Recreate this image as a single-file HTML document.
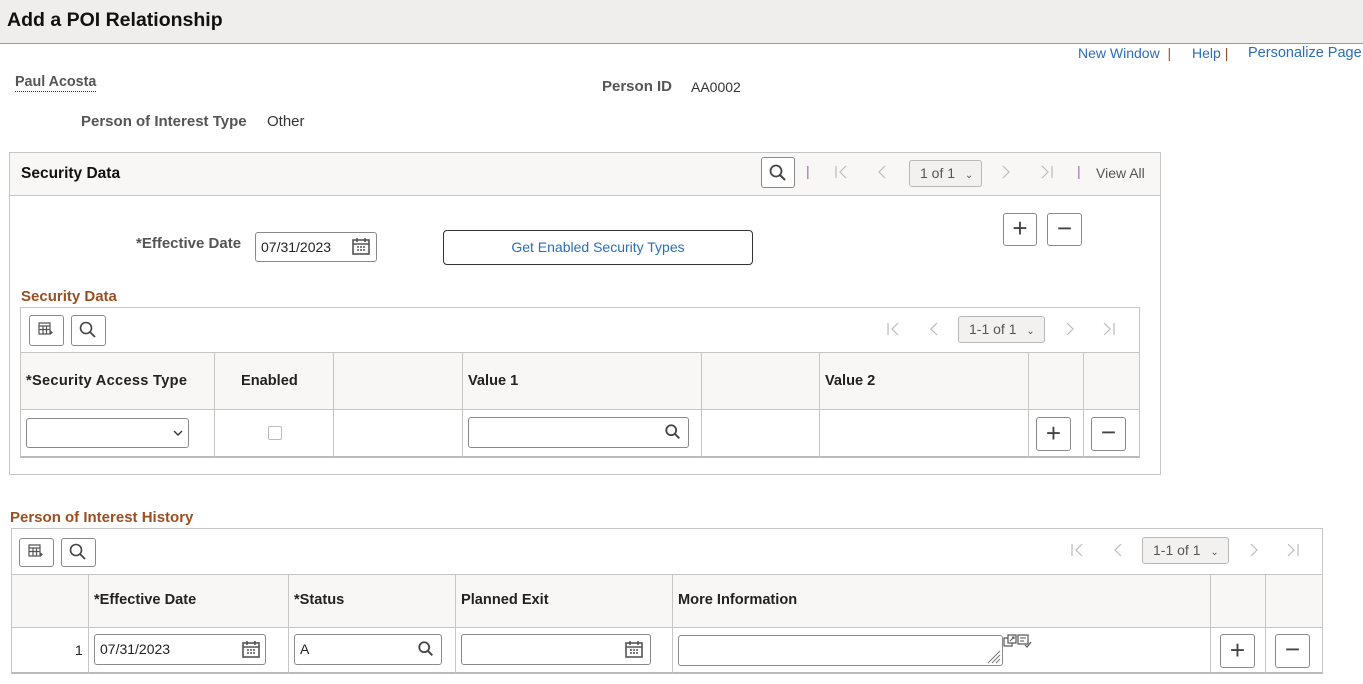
<!DOCTYPE html>
<html><head><meta charset="utf-8"><style>
*{box-sizing:border-box;margin:0;padding:0}
body{width:1363px;height:684px;position:relative;background:#fff;font-family:"Liberation Sans",Arial,sans-serif;font-size:14px;color:#333;overflow:hidden}
.a{position:absolute;white-space:nowrap}
.b{font-weight:bold}
.lbl{font-weight:bold;color:#555;font-size:15px}
.box{position:absolute;border:1px solid #c6c6c6}
.btn{position:absolute;border:1px solid #8a8a8a;border-radius:3px;background:#fff}
.inp{position:absolute;border:1px solid #8a8a8a;border-radius:3px;background:#fff;padding-left:5px;line-height:28px;color:#222}
.ln{position:absolute;background:#c6c6c6}
.hdr{position:absolute;background:#f8f7f6}
.t{color:#222;font-weight:bold;font-size:14.6px}
.grey{color:#bbb;font-size:16px;font-weight:300}
.sel{position:absolute;border:1px solid #b8b8b8;border-radius:3px;background:#f2f1f0;color:#555;padding-left:10px;line-height:24px}
.brown{color:#9b4f22;font-weight:bold;font-size:15px}
svg{position:absolute}
</style></head><body>
<div class="a" style="left:0;top:0;width:1363px;height:44px;background:#efeeed;border-bottom:1px solid #999"></div>
<div class="a b" style="left:7px;top:9px;font-size:19.5px;color:#111">Add a POI Relationship</div>
<div class="a" style="left:1078px;top:45px;color:#2a6ebb">New Window <span style="color:#9b4f22">&nbsp;|</span></div>
<div class="a" style="left:1192px;top:45px;color:#2a6ebb">Help <span style="color:#9b4f22">|</span></div>
<div class="a" style="left:1248px;top:45px;color:#2a6ebb;font-size:14.5px">Personalize Page</div>
<div class="a lbl" style="left:15px;top:74px;border-bottom:1px dotted #333;padding-bottom:1px;font-size:14.3px">Paul Acosta</div>
<div class="a lbl" style="left:602px;top:78px">Person ID</div>
<div class="a" style="left:691px;top:79px">AA0002</div>
<div class="a lbl" style="left:81px;top:113px">Person of Interest Type</div>
<div class="a" style="left:267px;top:113px;font-size:15px">Other</div>

<div class="box" style="left:9px;top:152px;width:1152px;height:323px"></div>
<div class="hdr" style="left:10px;top:153px;width:1150px;height:43px;border-bottom:1px solid #c6c6c6"></div>
<div class="a b" style="left:21px;top:165px;font-size:15.5px;color:#111">Security Data</div>
<div class="btn" style="left:761px;top:157px;width:34px;height:31px"></div>
<svg style="left:768px;top:163px" width="20" height="20" viewBox="0 0 20 20"><circle cx="8" cy="8" r="5.5" fill="none" stroke="#444" stroke-width="1.8"/><path d="M12 12l5 5" stroke="#444" stroke-width="2"/></svg>
<div class="a" style="left:806px;top:163px;color:#9b6fa0">|</div>
<svg style="left:834px;top:164px" width="14" height="16" viewBox="0 0 14 16"><path d="M2 2v12M12 2L6 8l6 6" fill="none" stroke="#bbb" stroke-width="1.2"/></svg>
<svg style="left:876px;top:164px" width="12" height="16" viewBox="0 0 12 16"><path d="M9 2L3 8l6 6" fill="none" stroke="#bbb" stroke-width="1.2"/></svg>
<div class="sel" style="left:909px;top:160px;width:73px;height:27px">1 of 1 <span style="font-size:10px;margin-left:6px">&#8964;</span></div>
<svg style="left:1000px;top:164px" width="12" height="16" viewBox="0 0 12 16"><path d="M3 2l6 6-6 6" fill="none" stroke="#bbb" stroke-width="1.2"/></svg>
<svg style="left:1040px;top:164px" width="14" height="16" viewBox="0 0 14 16"><path d="M2 2l6 6-6 6M12 2v12" fill="none" stroke="#bbb" stroke-width="1.2"/></svg>
<div class="a" style="left:1077px;top:163px;color:#9b6fa0">|</div>
<div class="a" style="left:1096px;top:165px;color:#555">View All</div>

<div class="btn" style="left:1003px;top:213px;width:34px;height:33px;font-size:26px;line-height:29px;text-align:center;color:#444">+</div>
<div class="btn" style="left:1047px;top:213px;width:35px;height:33px;font-size:26px;line-height:28px;text-align:center;color:#444">&minus;</div>

<div class="a lbl" style="left:136px;top:235px">*Effective Date</div>
<div class="inp" style="left:255px;top:232px;width:122px;height:30px">07/31/2023</div>
<svg style="left:351px;top:236px" width="20" height="20" viewBox="0 0 20 20"><rect x="2" y="4" width="16" height="14" fill="none" stroke="#555" stroke-width="1.6"/><path d="M2 8h16M6 2v4M14 2v4" stroke="#555" stroke-width="1.6"/><path d="M6 11h2M9 11h2M12 11h2M6 14h2M9 14h2M12 14h2" stroke="#555" stroke-width="1.4"/></svg>
<div class="a" style="left:443px;top:230px;width:310px;height:35px;border:1px solid #333;border-radius:4px;text-align:center;line-height:33px;color:#2a6ebb">Get Enabled Security Types</div>

<div class="a brown" style="left:21px;top:288px">Security Data</div>
<div class="box" style="left:20px;top:307px;width:1120px;height:151px;border-bottom:2px solid #bbb"></div>
<div class="btn" style="left:29px;top:315px;width:35px;height:31px"></div>
<svg style="left:37px;top:321px" width="18" height="18" viewBox="0 0 18 18"><path d="M2 2h11v11H2zM2 5h11M2 8.5h11M6 5v8M9.5 5v8" fill="none" stroke="#555" stroke-width="1.2"/><path d="M13 9l3 2.5-3 2.5z" fill="#555"/></svg>
<div class="btn" style="left:71px;top:315px;width:35px;height:31px"></div>
<svg style="left:78px;top:320px" width="20" height="20" viewBox="0 0 20 20"><circle cx="8" cy="8" r="5.5" fill="none" stroke="#444" stroke-width="1.6"/><path d="M12 12l5 5" stroke="#444" stroke-width="1.8"/></svg>
<svg style="left:886px;top:321px" width="14" height="16" viewBox="0 0 14 16"><path d="M2 2v12M12 2L6 8l6 6" fill="none" stroke="#bbb" stroke-width="1.2"/></svg>
<svg style="left:928px;top:321px" width="12" height="16" viewBox="0 0 12 16"><path d="M9 2L3 8l6 6" fill="none" stroke="#bbb" stroke-width="1.2"/></svg>
<div class="sel" style="left:958px;top:316px;width:87px;height:27px">1-1 of 1 <span style="font-size:10px;margin-left:6px">&#8964;</span></div>
<svg style="left:1064px;top:321px" width="12" height="16" viewBox="0 0 12 16"><path d="M3 2l6 6-6 6" fill="none" stroke="#bbb" stroke-width="1.2"/></svg>
<svg style="left:1102px;top:321px" width="14" height="16" viewBox="0 0 14 16"><path d="M2 2l6 6-6 6M12 2v12" fill="none" stroke="#bbb" stroke-width="1.2"/></svg>
<div class="hdr" style="left:21px;top:352px;width:1118px;height:58px;border-top:1px solid #c6c6c6;border-bottom:1px solid #c6c6c6"></div>
<div class="ln" style="left:214px;top:352px;width:1px;height:105px"></div>
<div class="ln" style="left:333px;top:352px;width:1px;height:105px"></div>
<div class="ln" style="left:462px;top:352px;width:1px;height:105px"></div>
<div class="ln" style="left:701px;top:352px;width:1px;height:105px"></div>
<div class="ln" style="left:819px;top:352px;width:1px;height:105px"></div>
<div class="ln" style="left:1028px;top:352px;width:1px;height:105px"></div>
<div class="ln" style="left:1083px;top:352px;width:1px;height:105px"></div>
<div class="a t" style="left:26px;top:373px;letter-spacing:0.3px">*Security Access Type</div>
<div class="a t" style="left:241px;top:373px">Enabled</div>
<div class="a t" style="left:468px;top:373px">Value 1</div>
<div class="a t" style="left:825px;top:373px">Value 2</div>
<div class="inp" style="left:26px;top:418px;width:163px;height:30px"></div>
<svg style="left:173px;top:429px" width="10" height="8" viewBox="0 0 10 8"><path d="M1 2l4 4 4-4" fill="none" stroke="#333" stroke-width="1.4"/></svg>
<div class="a" style="left:268px;top:426px;width:14px;height:14px;border:1px solid #bbb;border-radius:2px"></div>
<div class="inp" style="left:468px;top:417px;width:221px;height:31px"></div>
<svg style="left:664px;top:423px" width="18" height="18" viewBox="0 0 20 20"><circle cx="8" cy="8" r="5.5" fill="none" stroke="#444" stroke-width="2"/><path d="M12 12l5 5" stroke="#444" stroke-width="2.2"/></svg>
<div class="btn" style="left:1036px;top:417px;width:35px;height:34px;font-size:26px;line-height:30px;text-align:center;color:#444">+</div>
<div class="btn" style="left:1091px;top:417px;width:35px;height:34px;font-size:26px;line-height:29px;text-align:center;color:#444">&minus;</div>

<div class="a brown" style="left:10px;top:509px">Person of Interest History</div>
<div class="box" style="left:11px;top:528px;width:1312px;height:146px;border-bottom:2px solid #bbb"></div>
<div class="btn" style="left:19px;top:538px;width:35px;height:29px"></div>
<svg style="left:27px;top:543px" width="18" height="18" viewBox="0 0 18 18"><path d="M2 2h11v11H2zM2 5h11M2 8.5h11M6 5v8M9.5 5v8" fill="none" stroke="#555" stroke-width="1.2"/><path d="M13 9l3 2.5-3 2.5z" fill="#555"/></svg>
<div class="btn" style="left:61px;top:538px;width:35px;height:29px"></div>
<svg style="left:68px;top:542px" width="20" height="20" viewBox="0 0 20 20"><circle cx="8" cy="8" r="5.5" fill="none" stroke="#444" stroke-width="1.6"/><path d="M12 12l5 5" stroke="#444" stroke-width="1.8"/></svg>
<svg style="left:1070px;top:542px" width="14" height="16" viewBox="0 0 14 16"><path d="M2 2v12M12 2L6 8l6 6" fill="none" stroke="#bbb" stroke-width="1.2"/></svg>
<svg style="left:1112px;top:542px" width="12" height="16" viewBox="0 0 12 16"><path d="M9 2L3 8l6 6" fill="none" stroke="#bbb" stroke-width="1.2"/></svg>
<div class="sel" style="left:1142px;top:537px;width:87px;height:27px">1-1 of 1 <span style="font-size:10px;margin-left:6px">&#8964;</span></div>
<svg style="left:1248px;top:542px" width="12" height="16" viewBox="0 0 12 16"><path d="M3 2l6 6-6 6" fill="none" stroke="#bbb" stroke-width="1.2"/></svg>
<svg style="left:1286px;top:542px" width="14" height="16" viewBox="0 0 14 16"><path d="M2 2l6 6-6 6M12 2v12" fill="none" stroke="#bbb" stroke-width="1.2"/></svg>
<div class="hdr" style="left:12px;top:574px;width:1310px;height:54px;border-top:1px solid #c6c6c6;border-bottom:1px solid #c6c6c6"></div>
<div class="ln" style="left:88px;top:574px;width:1px;height:99px"></div>
<div class="ln" style="left:288px;top:574px;width:1px;height:99px"></div>
<div class="ln" style="left:455px;top:574px;width:1px;height:99px"></div>
<div class="ln" style="left:672px;top:574px;width:1px;height:99px"></div>
<div class="ln" style="left:1210px;top:574px;width:1px;height:99px"></div>
<div class="ln" style="left:1265px;top:574px;width:1px;height:99px"></div>
<div class="a t" style="left:94px;top:592px">*Effective Date</div>
<div class="a t" style="left:294px;top:592px">*Status</div>
<div class="a t" style="left:461px;top:592px">Planned Exit</div>
<div class="a t" style="left:678px;top:592px">More Information</div>
<div class="a" style="left:75px;top:642px;color:#222">1</div>
<div class="inp" style="left:94px;top:634px;width:172px;height:31px">07/31/2023</div>
<svg style="left:241px;top:639px" width="20" height="20" viewBox="0 0 20 20"><rect x="2" y="4" width="16" height="14" fill="none" stroke="#555" stroke-width="1.6"/><path d="M2 8h16M6 2v4M14 2v4" stroke="#555" stroke-width="1.6"/><path d="M6 11h2M9 11h2M12 11h2M6 14h2M9 14h2M12 14h2" stroke="#555" stroke-width="1.4"/></svg>
<div class="inp" style="left:294px;top:634px;width:148px;height:31px">A</div>
<svg style="left:417px;top:640px" width="18" height="18" viewBox="0 0 20 20"><circle cx="8" cy="8" r="5.5" fill="none" stroke="#444" stroke-width="2"/><path d="M12 12l5 5" stroke="#444" stroke-width="2.2"/></svg>
<div class="inp" style="left:461px;top:634px;width:190px;height:31px"></div>
<svg style="left:624px;top:639px" width="20" height="20" viewBox="0 0 20 20"><rect x="2" y="4" width="16" height="14" fill="none" stroke="#555" stroke-width="1.6"/><path d="M2 8h16M6 2v4M14 2v4" stroke="#555" stroke-width="1.6"/><path d="M6 11h2M9 11h2M12 11h2M6 14h2M9 14h2M12 14h2" stroke="#555" stroke-width="1.4"/></svg>
<div class="inp" style="left:678px;top:635px;width:325px;height:31px"></div>
<svg style="left:985px;top:648px" width="16" height="16" viewBox="0 0 16 16"><path d="M15 3L3 15M15 7L7 15M15 11L11 15" stroke="#777" stroke-width="1"/></svg>
<svg style="left:1003px;top:633px" width="32" height="18" viewBox="0 0 32 18"><rect x="1" y="5" width="8" height="8" fill="#fff" stroke="#555" stroke-width="1.2"/><rect x="5" y="2" width="8" height="8" fill="#fff" stroke="#555" stroke-width="1.2"/><path d="M7 8l4-4M9 4h2v2" stroke="#555" stroke-width="1"/><rect x="15" y="2" width="10" height="9" fill="none" stroke="#555" stroke-width="1.2"/><path d="M17 5h6M17 8h4M22 12l2 2 4-5" fill="none" stroke="#555" stroke-width="1.1"/></svg>
<div class="btn" style="left:1220px;top:634px;width:35px;height:34px;font-size:26px;line-height:30px;text-align:center;color:#444">+</div>
<div class="btn" style="left:1275px;top:634px;width:35px;height:34px;font-size:26px;line-height:29px;text-align:center;color:#444">&minus;</div>
</body></html>
